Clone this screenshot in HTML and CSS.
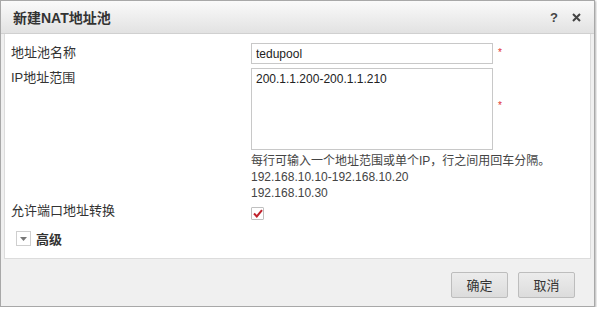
FILE: index.html
```html
<!DOCTYPE html>
<html lang="zh-CN">
<head>
    <meta charset="UTF-8">
    <title>新建NAT地址池</title>
    <link rel="stylesheet" href="styles.css">
</head>
<body>
    <div class="dialog">
        <div class="dialog-title">
            <span class="title-text">新建NAT地址池</span>
            <span class="title-tools">
                <span class="tool-help">?</span>
                <span class="tool-close">
                    <svg width="9" height="9" viewBox="0 0 9 9"><path d="M1 1L8 8M8 1L1 8" stroke="#444" stroke-width="2"/></svg>
                </span>
            </span>
        </div>
        <div class="dialog-body">
            <div class="row">
                <label class="label">地址池名称</label>
                <div class="field">
                    <input class="text-input" type="text" value="tedupool">
                </div>
                <span class="required">*</span>
            </div>
            <div class="row row-area">
                <label class="label">IP地址范围</label>
                <div class="field">
                    <textarea class="text-area">200.1.1.200-200.1.1.210</textarea>
                    <div class="hint">
                        <div>每行可输入一个地址范围或单个IP，行之间用回车分隔。</div>
                        <div>192.168.10.10-192.168.10.20</div>
                        <div>192.168.10.30</div>
                    </div>
                </div>
                <span class="required required-area">*</span>
            </div>
            <div class="row row-check">
                <label class="label">允许端口地址转换</label>
                <div class="field">
                    <span class="checkbox">
                        <svg width="10" height="9" viewBox="0 0 10 9"><path d="M1 4.5L3.8 7.5L9 1.2" fill="none" stroke="#c0222c" stroke-width="2"/></svg>
                    </span>
                </div>
            </div>
            <div class="advanced">
                <span class="toggle">
                    <svg width="7" height="4" viewBox="0 0 7 4"><path d="M0 0H7L3.5 4Z" fill="#777"/></svg>
                </span>
                <span class="advanced-text">高级</span>
            </div>
        </div>
        <div class="dialog-footer">
            <button class="btn">确定</button>
            <button class="btn">取消</button>
        </div>
    </div>
</body>
</html>
```

FILE: styles.css
```css
body {
    margin: 0;
    font-family: "Liberation Sans", Arial, "Noto Sans CJK SC", sans-serif;
    font-size: 12px;
    color: #333;
    background: #fff;
}

.dialog {
    width: 593px;
    height: 305px;
    border: 1px solid #a8a8a8;
    background: #f0f0f0;
    box-shadow: 1px 1px 2px rgba(0, 0, 0, 0.3);
    display: flex;
    flex-direction: column;
}

.dialog-title {
    height: 32px;
    display: flex;
    align-items: center;
    justify-content: space-between;
    padding: 0 13px 0 12px;
    background: linear-gradient(#fafafa, #e2e2e2);
    border-bottom: 1px solid #d0d0d0;
}

.title-text {
    font-size: 14px;
    font-weight: bold;
    color: #333;
}

.title-tools {
    display: flex;
    align-items: center;
    gap: 14px;
}

.tool-help {
    font-size: 13px;
    font-weight: bold;
    color: #444;
}

.tool-close {
    display: flex;
}

.dialog-body {
    flex: 1;
    margin: 0 3px;
    background: #fff;
    border: 1px solid #dcdcdc;
    border-top: none;
    padding: 9px 0 0 6px;
}

.row {
    display: flex;
    align-items: flex-start;
    margin-bottom: 4px;
}

.label {
    width: 240px;
    font-size: 13px;
    color: #333;
    line-height: 20px;
}

.field {
    width: 242px;
}

.text-input {
    display: block;
    width: 242px;
    height: 21px;
    box-sizing: border-box;
    border: 1px solid #c8c8c8;
    padding: 2px 4px;
    font-family: "Liberation Sans", Arial, sans-serif;
    font-size: 12px;
    color: #222;
    outline: none;
}

.text-area {
    display: block;
    width: 242px;
    height: 82px;
    box-sizing: border-box;
    border: 1px solid #c8c8c8;
    padding: 3px 4px;
    font-family: "Liberation Sans", Arial, sans-serif;
    font-size: 12px;
    color: #222;
    resize: none;
    outline: none;
}

.required {
    color: #e03030;
    font-size: 10px;
    margin-left: 5px;
    line-height: 20px;
}

.required-area {
    margin-top: 28px;
}

.hint {
    margin-top: 3px;
    line-height: 16px;
    color: #444;
    white-space: nowrap;
}

.row-check {
    margin-top: -4px;
    align-items: center;
}

.checkbox {
    width: 11px;
    height: 11px;
    border: 1px solid #c0c0c0;
    display: flex;
    align-items: center;
    justify-content: center;
    border-radius: 1px;
    margin-top: 4px;
}

.advanced {
    display: flex;
    align-items: center;
    margin: 8px 0 0 5px;
    gap: 5px;
}

.toggle {
    width: 13px;
    height: 13px;
    border: 1px solid #cfcfcf;
    display: flex;
    align-items: center;
    justify-content: center;
}

.advanced-text {
    font-size: 13px;
    font-weight: bold;
    color: #333;
}

.dialog-footer {
    height: 47px;
    display: flex;
    align-items: center;
    justify-content: flex-end;
    gap: 10px;
    padding-right: 19px;
}

.btn {
    width: 57px;
    height: 26px;
    border: 1px solid #bdbdbd;
    background: linear-gradient(#ececec, #dcdcdc);
    font-family: "Liberation Sans", Arial, "Noto Sans CJK SC", sans-serif;
    font-size: 13px;
    color: #333;
    border-radius: 2px;
    margin-top: 4px;
}
```
